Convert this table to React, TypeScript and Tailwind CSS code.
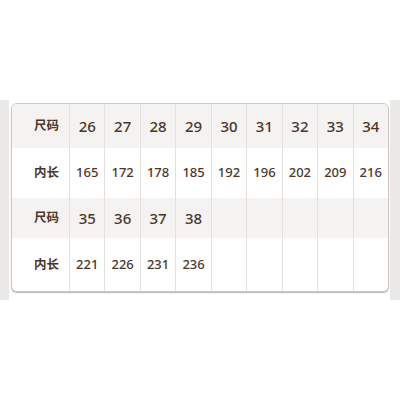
import React from "react";

const rows: { label: string; values: string[]; h: string; bg: string; big: boolean }[] = [
  { label: "尺码", values: ["26", "27", "28", "29", "30", "31", "32", "33", "34"], h: "h-[44px]", bg: "bg-[#f4f3f2]", big: true },
  { label: "内长", values: ["165", "172", "178", "185", "192", "196", "202", "209", "216"], h: "h-[50px]", bg: "bg-white", big: false },
  { label: "尺码", values: ["35", "36", "37", "38", "", "", "", "", ""], h: "h-[40px]", bg: "bg-[#f4f3f2]", big: true },
  { label: "内长", values: ["221", "226", "231", "236", "", "", "", "", ""], h: "h-[54px]", bg: "bg-white", big: false },
];

export default function App() {
  return (
    <div className="w-[400px] h-[400px] bg-white pt-[100px]" style={{ fontFamily: '"Noto Sans", "Noto Sans CJK SC", sans-serif' }}>
      <div className="flex h-[200px]">
        <div className="w-[9px] bg-[#ebe9e7]" />
        <div className="flex-1 pl-[2px] pr-[1px] pt-[3px]">
          <div className="w-[378px] h-[189px] bg-white rounded-[6px] border border-[#cdc7c1] shadow-[0_1px_1px_rgba(120,105,95,0.5)] overflow-hidden">
            {rows.map((r, i) => (
              <div key={i} className={`grid grid-cols-[57px_repeat(9,1fr)] ${r.h} ${r.bg}`}>
                <div className="flex items-center justify-end pr-[10px] text-[12.5px] font-bold text-[#4b362b]">{r.label}</div>
                {r.values.map((v, j) => (
                  <div
                    key={j}
                    className={`flex items-center justify-center border-l border-[#e3e0dd] text-[#4b362b] ${r.big ? "text-[15px] font-medium" : "text-[13px] font-medium"}`}
                  >
                    {v}
                  </div>
                ))}
              </div>
            ))}
          </div>
        </div>
        <div className="w-[10px] bg-[#ebe9e7]" />
      </div>
    </div>
  );
}
